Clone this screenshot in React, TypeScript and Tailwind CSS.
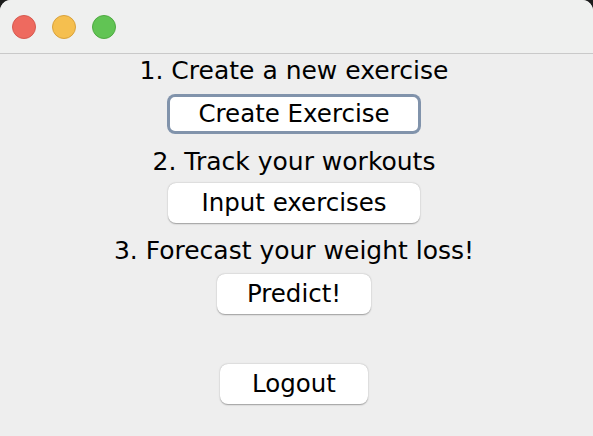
import React from "react";

const font = { fontFamily: '"DejaVu Sans", Verdana, sans-serif' };

function Btn({ label, w, focused }: { label: string; w: string; focused?: boolean }) {
  return (
    <button
      className={`${w} h-[40px] flex items-center justify-center rounded-[8px] bg-white text-[24.5px] text-black ${
        focused
          ? "ring-[3px] ring-[#8193ab] ring-inset"
          : "shadow-[0_0.5px_1.5px_rgba(0,0,0,0.35)]"
      }`}
    >
      {label}
    </button>
  );
}

export default function App() {
  return (
    <div className="w-[593px] h-[436px] bg-[#1c1c1c]" style={font}>
      <div className="w-full h-full rounded-t-[11px] overflow-hidden flex flex-col bg-[#eeeeee]">
        {/* title bar */}
        <div className="h-[54px] shrink-0 bg-[#eff0ef] border-b border-[#c9c9c9] flex items-center gap-[16px] pl-[12px]">
          <span className="w-[24px] h-[24px] rounded-full bg-[#ee6a5f] border border-[#d65a50]" />
          <span className="w-[24px] h-[24px] rounded-full bg-[#f5bf4f] border border-[#d9a23c]" />
          <span className="w-[24px] h-[24px] rounded-full bg-[#61c454] border border-[#4faa42]" />
        </div>

        {/* content */}
        <div className="flex flex-col items-center pr-[5px] text-black">
          <div className="mt-[3px] h-[28px] leading-[28px] text-[25px]">1. Create a new exercise</div>
          <div className="mt-[9px]">
            <Btn label="Create Exercise" w="w-[254px]" focused />
          </div>
          <div className="mt-[14px] h-[28px] leading-[28px] text-[25px]">2. Track your workouts</div>
          <div className="mt-[7px]">
            <Btn label="Input exercises" w="w-[252px]" />
          </div>
          <div className="mt-[14px] h-[28px] leading-[28px] text-[25px]">3. Forecast your weight loss!</div>
          <div className="mt-[9px]">
            <Btn label="Predict!" w="w-[154px]" />
          </div>
          <div className="mt-[50px]">
            <Btn label="Logout" w="w-[148px]" />
          </div>
        </div>
      </div>
    </div>
  );
}
